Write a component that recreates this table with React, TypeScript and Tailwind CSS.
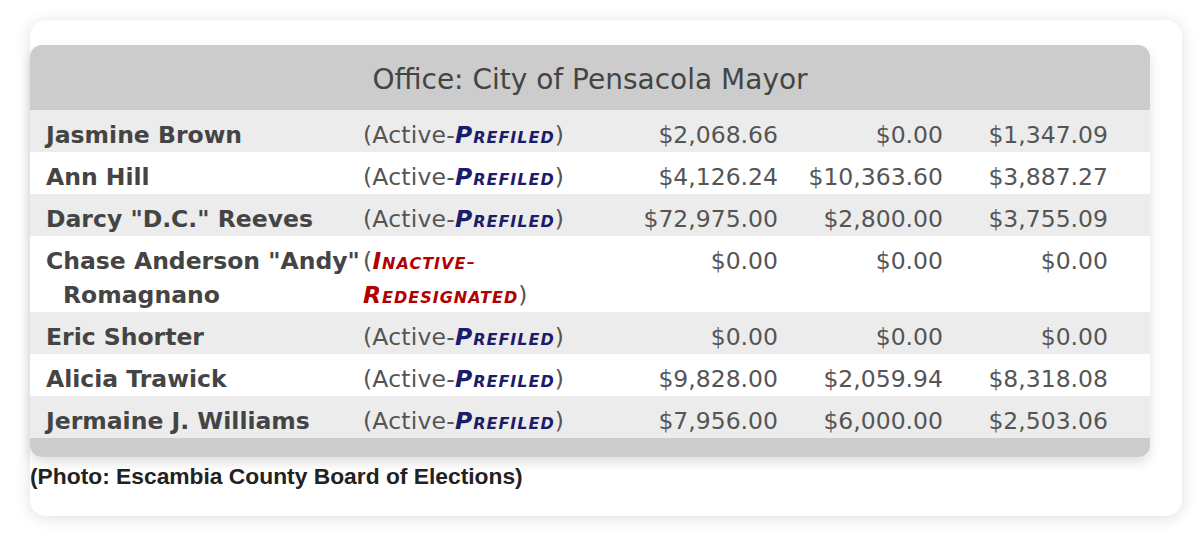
import React from 'react';

type Row = {
  name: string;
  sub?: string;
  inactive?: boolean;
  a: string;
  b: string;
  c: string;
};

const rows: Row[] = [
  { name: 'Jasmine Brown', a: '$2,068.66', b: '$0.00', c: '$1,347.09' },
  { name: 'Ann Hill', a: '$4,126.24', b: '$10,363.60', c: '$3,887.27' },
  { name: 'Darcy "D.C." Reeves', a: '$72,975.00', b: '$2,800.00', c: '$3,755.09' },
  { name: 'Chase Anderson "Andy"', sub: 'Romagnano', inactive: true, a: '$0.00', b: '$0.00', c: '$0.00' },
  { name: 'Eric Shorter', a: '$0.00', b: '$0.00', c: '$0.00' },
  { name: 'Alicia Trawick', a: '$9,828.00', b: '$2,059.94', c: '$8,318.08' },
  { name: 'Jermaine J. Williams', a: '$7,956.00', b: '$6,000.00', c: '$2,503.06' },
];

function Status({ inactive }: { inactive?: boolean }) {
  if (inactive) {
    return (
      <div className="text-[#555] tracking-[0.2px]">
        (<span className="font-bold italic tracking-[1px] text-[#b00000] [font-variant:small-caps]">Inactive</span>
        <span className="text-[#b00000]">-</span>
        <br />
        <span className="font-bold italic tracking-[1px] text-[#b00000] [font-variant:small-caps]">Redesignated</span>)
      </div>
    );
  }
  return (
    <div className="text-[#555] whitespace-nowrap tracking-[0.2px]">
      (Active-<span className="font-bold italic tracking-[1px] text-[#1c1c6b] [font-variant:small-caps]">Prefiled</span>)
    </div>
  );
}

export default function App() {
  return (
    <div className="min-h-[538px] bg-white pt-5 pl-[30px] pr-[18px]">
      <div className="rounded-2xl bg-white pt-[25px] pr-8 pb-[27px] shadow-[0_2px_16px_rgba(0,0,0,0.13)]">
        <div className="rounded-xl shadow-[0_6px_12px_rgba(0,0,0,0.12)] font-['DejaVu_Sans',Verdana,sans-serif] text-[23.5px]">
          <div className="h-[65px] rounded-t-xl bg-[#cccccc] text-[#444] text-[28px] flex items-center justify-center pt-1">
            Office: City of Pensacola Mayor
          </div>
          {rows.map((r, i) => (
            <div
              key={r.name}
              className={`grid grid-cols-[333px_250px_165px_165px_165px] pt-2 leading-[34px] ${
                i % 2 === 0 ? 'bg-[#ececec]' : 'bg-white'
              }`}
            >
              <div className="pl-4 font-bold text-[#444] whitespace-nowrap">
                {r.name}
                {r.sub && <div className="pl-[17px]">{r.sub}</div>}
              </div>
              <Status inactive={r.inactive} />
              <div className="text-right text-[#555]">{r.a}</div>
              <div className="text-right text-[#555]">{r.b}</div>
              <div className="text-right text-[#555]">{r.c}</div>
            </div>
          ))}
          <div className="h-[19px] rounded-b-xl bg-[#cccccc]" />
        </div>
        <p className="mt-[6px] font-['Liberation_Sans',Arial,sans-serif] font-bold text-[22.8px] leading-[26px] text-[#222]">
          (Photo: Escambia County Board of Elections)
        </p>
      </div>
    </div>
  );
}
